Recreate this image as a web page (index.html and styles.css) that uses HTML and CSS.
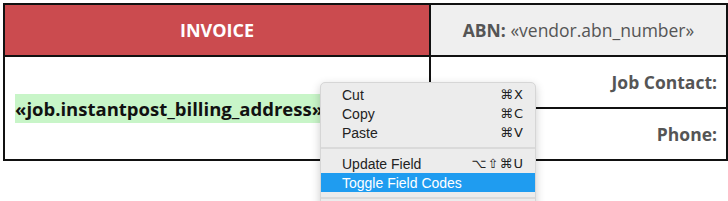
FILE: index.html
```html
<!DOCTYPE html>
<html lang="en">
<head>
  <meta charset="UTF-8" />
  <title>Invoice template</title>
  <link rel="stylesheet" href="styles.css">
</head>
<body>
  <table class="invoice">
    <tr>
      <td class="title">INVOICE</td>
      <td class="abn"><b>ABN:</b> «vendor.abn_number»</td>
    </tr>
    <tr>
      <td class="address" rowspan="2"><span class="field">«job.instantpost_billing_address»</span></td>
      <td class="label">Job Contact:</td>
    </tr>
    <tr>
      <td class="label">Phone:</td>
    </tr>
  </table>

  <!-- Context Menu -->
  <ul class="menu">
    <li><span>Cut</span><span class="key">⌘X</span></li>
    <li><span>Copy</span><span class="key">⌘C</span></li>
    <li><span>Paste</span><span class="key">⌘V</span></li>
    <li class="sep"></li>
    <li><span>Update Field</span><span class="key">⌥⇧⌘U</span></li>
    <li class="active"><span>Toggle Field Codes</span></li>
    <li class="sep"></li>
  </ul>
</body>
</html>
```

FILE: styles.css
```css
body {
  margin: 0;
  padding: 3px 0 0 3px;
  background: #fff;
  font-family: 'Open Sans', sans-serif;
}

.invoice {
  border-collapse: collapse;
  width: 725px;
}

.invoice td {
  border: 2px solid #111;
  padding: 0;
  height: 50px;
}

.title {
  width: 424px;
  background-color: #cb4b4f;
  color: #fff;
  font-weight: bold;
  font-size: 18px;
  text-align: center;
}

.abn {
  background-color: #efefef;
  color: #555;
  font-size: 17.5px;
  text-align: center;
}

.address {
  padding-left: 10px !important;
  font-size: 18.5px;
  font-weight: bold;
  color: #111;
}

.field {
  background-color: #c8f5c8;
  padding: 2px 0;
}

.label {
  text-align: right;
  padding-right: 9px !important;
  font-size: 17.5px;
  font-weight: bold;
  color: #555;
}

.menu {
  position: absolute;
  left: 320px;
  top: 82px;
  width: 214px;
  margin: 0;
  padding: 2px 0 4px;
  list-style: none;
  background-color: #ececec;
  border: 1px solid #d6d6d6;
  border-radius: 5px;
  box-shadow: 0 3px 10px rgba(0, 0, 0, 0.2);
  font-family: 'Liberation Sans', 'DejaVu Sans', sans-serif;
  font-size: 14px;
  color: #222;
}

.menu li {
  display: flex;
  justify-content: space-between;
  align-items: center;
  height: 19px;
  padding: 0 11px 0 21px;
}

.menu li.sep {
  height: 12px;
  padding: 0;
  position: relative;
}

.menu li.sep::after {
  content: '';
  position: absolute;
  left: 0;
  right: 0;
  top: 5px;
  height: 2px;
  background: #dadada;
}

.menu li.active {
  background-color: #1f9cf0;
  color: #fff;
}

.key {
  font-family: 'DejaVu Sans', sans-serif;
  font-size: 13px;
  letter-spacing: 1px;
}
```
